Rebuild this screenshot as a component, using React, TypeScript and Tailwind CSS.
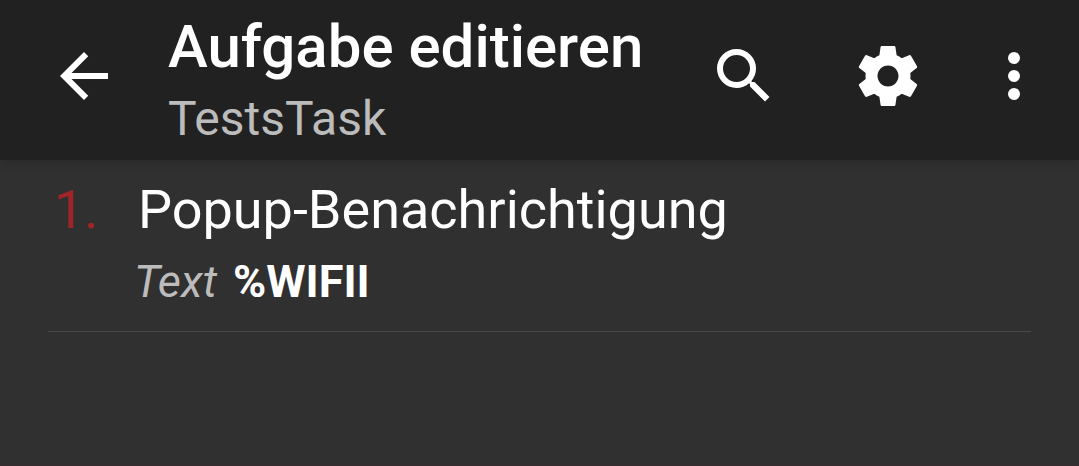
export default function App() {
  return (
    <div className="flex min-h-screen flex-col border-b border-[#382c30] bg-[#303030] font-['Roboto',sans-serif] text-white">
      <header className="flex h-40 items-center bg-[#212121] pr-[11px] pb-2 pl-12 shadow-[0_2px_10px_rgba(0,0,0,0.15)]">
        <button type="button" aria-label="Zurück" className="flex size-[72px] items-center justify-center">
          <svg viewBox="0 0 24 24" className="size-[72px]" fill="currentColor">
            <path d="M20 11H7.83l5.59-5.59L12 4l-8 8 8 8 1.41-1.41L7.83 13H20v-2z" />
          </svg>
        </button>
        <div className="ml-12 flex-1 pt-[14px]">
          <h1 className="text-[60px] leading-[72px] font-medium">Aufgabe editieren</h1>
          <p className="text-[48px] leading-[72px] text-[#bcbcbc]">TestsTask</p>
        </div>
        <div className="flex items-center">
          <button type="button" aria-label="Suchen" className="flex w-36 justify-center">
            <svg viewBox="0 0 24 24" className="size-[72px]" fill="currentColor">
              <path d="M15.5 14h-.79l-.28-.27A6.471 6.471 0 0 0 16 9.500 6.500 6.500 0 1 0 9.500 16c1.610 0 3.090-.59 4.230-1.570l.27.28v.79l5 4.990L20.490 19l-4.990-5zm-6 0C7.010 14 5 11.990 5 9.500S7.010 5 9.500 5 14 7.010 14 9.500 11.990 14 9.500 14z" />
            </svg>
          </button>
          <button type="button" aria-label="Einstellungen" className="flex w-36 justify-center">
            <svg viewBox="0 0 24 24" className="size-[72px]" fill="currentColor">
              <path d="M19.430 12.980c.04-.32.07-.64.07-.98s-.03-.66-.07-.98l2.110-1.650c.19-.15.24-.42.12-.64l-2-3.460c-.12-.22-.39-.3-.61-.22l-2.490 1c-.52-.4-1.080-.73-1.690-.98l-.38-2.650C14.460 2.180 14.250 2 14 2h-4c-.25 0-.46.18-.49.42l-.38 2.650c-.61.25-1.170.59-1.690.98l-2.490-1c-.23-.09-.49 0-.61.22l-2 3.460c-.13.22-.07.49.12.64l2.110 1.650c-.04.32-.07.65-.07.98s.03.66.07.98l-2.110 1.650c-.19.15-.24.42-.12.64l2 3.460c.12.22.39.3.61.22l2.490-1c.52.4 1.080.73 1.690.98l.38 2.650c.03.24.24.42.49.42h4c.25 0 .46-.18.49-.42l.38-2.650c.61-.25 1.170-.59 1.690-.98l2.490 1c.23.09.49 0 .61-.22l2-3.460c.12-.22.07-.49-.12-.64l-2.110-1.650zM12 15.500c-1.930 0-3.500-1.570-3.500-3.500s1.570-3.500 3.500-3.500 3.500 1.570 3.500 3.500-1.570 3.500-3.500 3.500z" />
            </svg>
          </button>
          <button type="button" aria-label="Weitere Optionen" className="flex w-[108px] justify-center">
            <svg viewBox="0 0 24 24" className="size-[72px]" fill="currentColor">
              <circle cx="12" cy="6" r="2" />
              <circle cx="12" cy="12" r="2" />
              <circle cx="12" cy="18" r="2" />
            </svg>
          </button>
        </div>
      </header>
      <main className="px-12">
        <ol>
          <li className="flex border-b border-[#484848] pt-4 pb-3">
            <span className="w-[86px] shrink-0 pl-1.5 text-[54px] leading-[68px] text-[#a02528]">1.</span>
            <div>
              <h2 className="pl-1 text-[54px] leading-[68px]">Popup-Benachrichtigung</h2>
              <p className="flex items-baseline gap-4 text-[45px] leading-[75px]">
                <em className="text-[#bcbcbc]">Text</em>
                <strong className="font-bold">%WIFII</strong>
              </p>
            </div>
          </li>
        </ol>
      </main>
    </div>
  );
}
